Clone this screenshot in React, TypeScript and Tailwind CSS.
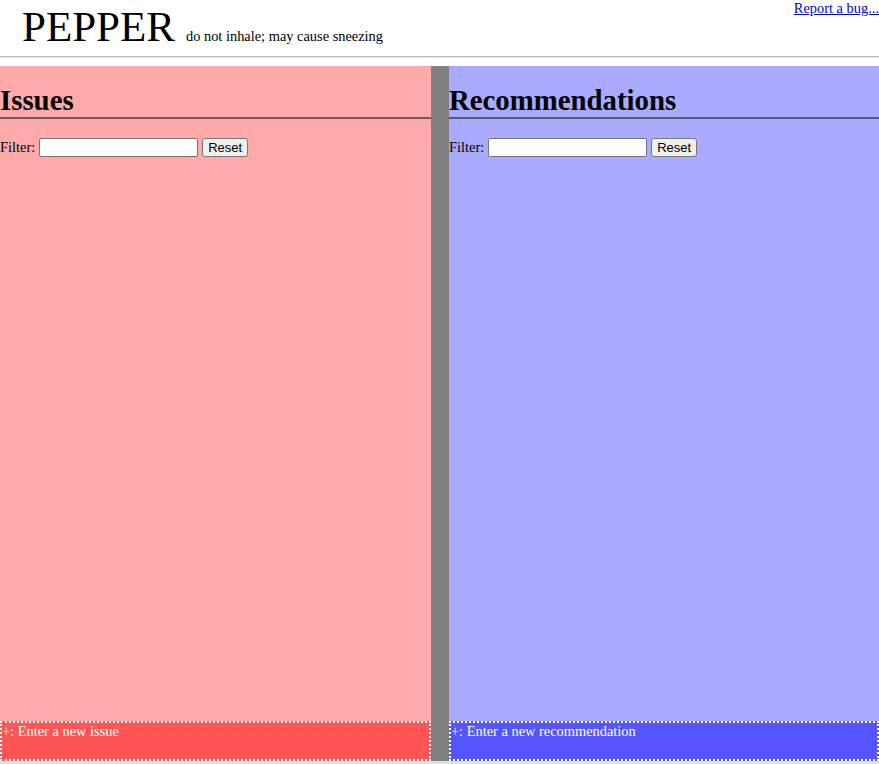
import React from "react";

function Panel({ title, bg, dark, placeholder, border }: { title: string; bg: string; dark: string; placeholder: string; border: string }) {
  return (
    <div className={`flex flex-col h-full ${bg}`}>
      <h2 className={`mt-[18px] text-[28.8px] leading-[33px] font-bold border-b-2 ${border}`}>{title}</h2>
      <div className="mt-[19px] flex items-center text-[14.4px] leading-[19px]">
        <span>Filter:</span>
        <input className="ml-[4px] w-[159px] h-[19px] bg-white border border-[#767676] rounded-[2px] outline-none" />
        <button className="ml-[4px] h-[19px] px-[5px] bg-[#efefef] border border-[#767676] rounded-[3px] text-[13px] leading-[15px] font-['Liberation_Sans',Arial,sans-serif] text-black">
          Reset
        </button>
      </div>
      <div className="flex-1" />
      <div className={`h-[40px] border-2 border-dotted border-white ${dark} text-white text-[14.4px] leading-[16px]`}>
        {placeholder}
      </div>
    </div>
  );
}

export default function App() {
  return (
    <div className="w-[879px] h-[764px] bg-white font-['Liberation_Serif','Times_New_Roman',serif] text-black overflow-hidden">
      <div className="flex justify-between items-start h-[48px]">
        <div className="pl-[22px] pt-[5px] leading-[43px] whitespace-nowrap">
          <span className="text-[43px]">PEPPER</span>
          <span className="text-[14.4px] ml-[11px]">do not inhale; may cause sneezing</span>
        </div>
        <a href="#" className="text-[14.4px] leading-[16px] text-[#0000ee] underline">Report a bug...</a>
      </div>
      <div className="mt-[8px] border-t border-t-[#bdbdbd] border-b border-b-[#e6e6e6]" />
      <div className="mt-[8px] grid grid-cols-[431px_18px_1fr] h-[695px]">
        <Panel title="Issues" bg="bg-[#ffaaaa]" dark="bg-[#ff5555]" border="border-[#6e5a5a]" placeholder="+: Enter a new issue" />
        <div className="bg-[#808080]" />
        <Panel title="Recommendations" bg="bg-[#aaaaff]" dark="bg-[#5555ff]" border="border-[#5a5a6e]" placeholder="+: Enter a new recommendation" />
      </div>
      <div className="h-[3px] bg-[#e0e0e0]" />
    </div>
  );
}
